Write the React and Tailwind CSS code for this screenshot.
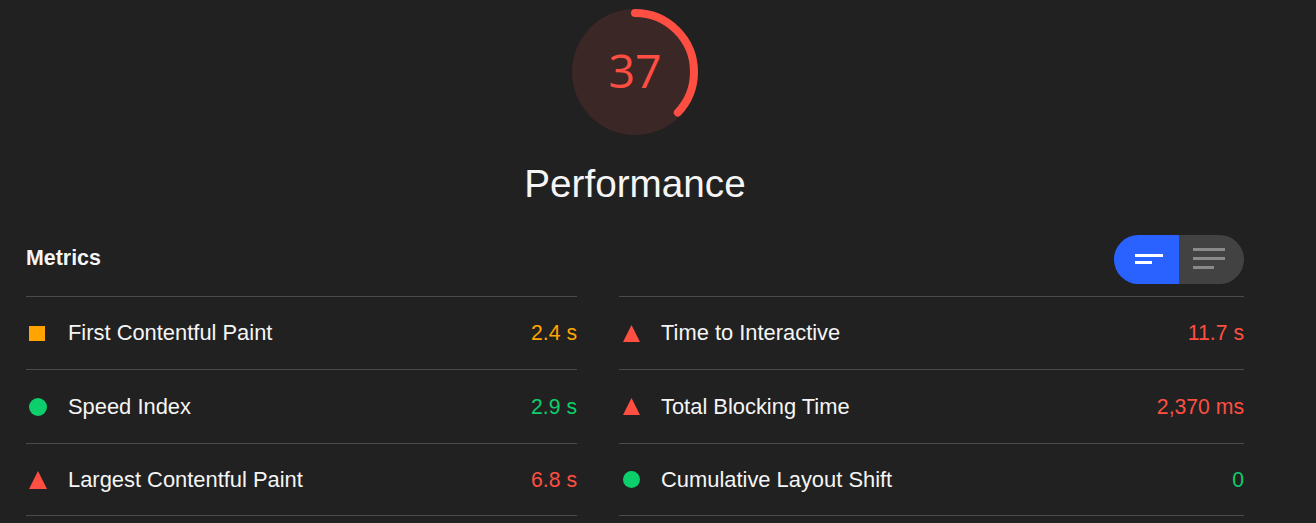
import React from 'react';

const leftMetrics = [
  { label: 'First Contentful Paint', value: '2.4 s', status: 'average' },
  { label: 'Speed Index', value: '2.9 s', status: 'pass' },
  { label: 'Largest Contentful Paint', value: '6.8 s', status: 'fail' },
];

const rightMetrics = [
  { label: 'Time to Interactive', value: '11.7 s', status: 'fail' },
  { label: 'Total Blocking Time', value: '2,370 ms', status: 'fail' },
  { label: 'Cumulative Layout Shift', value: '0', status: 'pass' },
];

const StatusIcon = ({ status, size }) => {
  if (status === 'average') return <span className="block w-4 h-[15px] bg-[#ffa400]" />;
  if (status === 'pass') {
    return <span className="block rounded-full bg-[#0cce6b]" style={{ width: size, height: size }} />;
  }
  return (
    <svg width={size} height={size} viewBox="0 0 18 18" className="block">
      <polygon points="9,0 18,18 0,18" fill="#ff4e42" />
    </svg>
  );
};

const valueColors = {
  average: 'text-[#ffa400]',
  pass: 'text-[#0cce6b]',
  fail: 'text-[#ff4e42]',
};

const MetricRow = ({ metric, iconSize, iconClass }) => (
  <div className="flex items-center border-b border-[#4a4a4a] h-[73px] [&:nth-child(2)]:h-[74px] [&:nth-child(3)]:h-[72px]">
    <div className={`w-[42px] shrink-0 flex items-center ${iconClass}`}>
      <StatusIcon status={metric.status} size={iconSize} />
    </div>
    <span className="flex-1 text-[21.9px] leading-6 text-[#f5f5f5]">{metric.label}</span>
    <span className={`text-[21.2px] leading-6 ${valueColors[metric.status]}`}>{metric.value}</span>
  </div>
);

const Gauge = () => (
  <div className="relative w-[126px] h-[126px]">
    <svg width="126" height="126" viewBox="0 0 126 126" className="block">
      <circle cx="63" cy="63" r="63" fill="#3b2726" />
      <circle
        cx="63"
        cy="63"
        r="59"
        fill="none"
        stroke="#ff4e42"
        strokeWidth="8"
        strokeLinecap="round"
        strokeDasharray="137.2 370.7"
        transform="rotate(-90 63 63)"
      />
    </svg>
    <div className="absolute inset-0 flex items-center justify-center pb-[2px] text-[46.5px] text-[#ff4e42] font-['Open_Sans',sans-serif]">
      37
    </div>
  </div>
);

const ViewToggle = () => (
  <div className="flex w-[130px] h-[49px] rounded-full overflow-hidden">
    <div className="w-[65px] bg-[#2962ff] flex flex-col justify-center gap-[4px] pl-[21px] pb-[2px]">
      <span className="block w-[28px] h-[3px] bg-white" />
      <span className="block w-[17px] h-[3px] bg-white" />
    </div>
    <div className="flex-1 bg-[#424242] flex flex-col justify-center gap-[6px] pl-[14px] pb-[2px]">
      <span className="block w-[32px] h-[3px] bg-[#8a8a8a]" />
      <span className="block w-[32px] h-[3px] bg-[#8a8a8a]" />
      <span className="block w-[21px] h-[3px] bg-[#8a8a8a]" />
    </div>
  </div>
);

export default function App() {
  return (
    <div className="w-[1316px] h-[523px] overflow-hidden bg-[#212121] font-['Liberation_Sans',Arial,sans-serif]">
      <div className="mx-[26px] w-[1218px] pt-[9px]">
        <div className="flex flex-col items-center">
          <Gauge />
          <h1 className="mt-[26px] text-[38.7px] leading-[46px] text-[#f5f5f5]">Performance</h1>
        </div>
        <div className="mt-[28px] flex items-center justify-between h-[49px]">
          <h2 className="pb-[3px] text-[21.4px] font-bold leading-6 text-[#f5f5f5]">Metrics</h2>
          <ViewToggle />
        </div>
        <div className="mt-[12px] grid grid-cols-[551px_625px] gap-x-[42px]">
          <div className="border-t border-[#4a4a4a]">
            {leftMetrics.map(m => <MetricRow key={m.label} metric={m} iconSize={18} iconClass="pl-[3px]" />)}
          </div>
          <div className="border-t border-[#4a4a4a]">
            {rightMetrics.map(m => <MetricRow key={m.label} metric={m} iconSize={17} iconClass="pl-[4px]" />)}
          </div>
        </div>
      </div>
    </div>
  );
}
